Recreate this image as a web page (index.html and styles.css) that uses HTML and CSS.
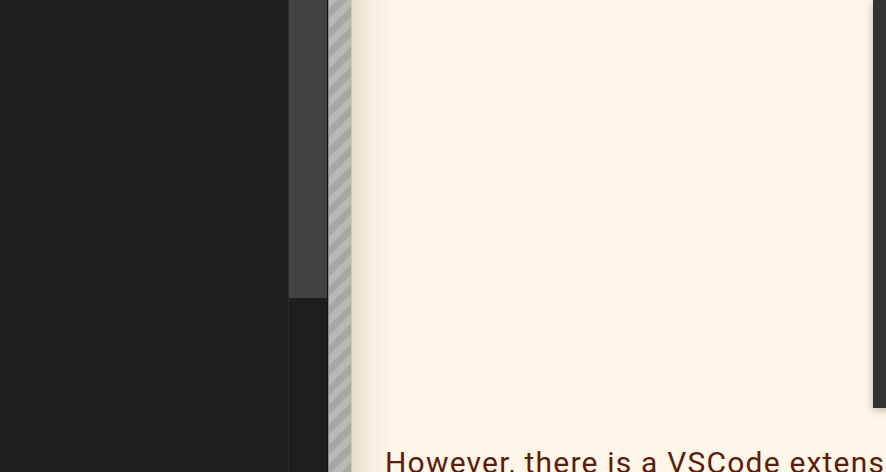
FILE: index.html
```html
<!DOCTYPE html>
<html>
<head>
<meta charset="utf-8">
<link rel="stylesheet" href="styles.css">
</head>
<body>
<div class="app">
  <div class="sidebar"></div>
  <div class="scroll-track"><div class="scroll-thumb"></div></div>
  <div class="divider"></div>
  <div class="gutter"></div>
  <main class="page">
    <div class="code-box"></div>
    <p class="para">However, there is a VSCode extension</p>
  </main>
</div>
</body>
</html>
```
FILE: styles.css
```css
html, body {
  margin: 0;
  padding: 0;
  width: 886px;
  height: 472px;
  overflow: hidden;
  background: #1e1e1e;
}
.app {
  display: flex;
  height: 472px;
}
.sidebar {
  width: 288px;
  flex: none;
  background: #1e1e1e;
  border-right: 1px solid #2b2b2b;
}
.scroll-track {
  width: 38px;
  flex: none;
  background: #1e1e1e;
}
.scroll-thumb {
  height: 298px;
  background: #424242;
}
.divider {
  width: 1px;
  flex: none;
  background: #111;
  border-right: 1px solid #8a8a8a;
}
.gutter {
  width: 22px;
  flex: none;
  background: repeating-linear-gradient(-45deg, #a7a7a7 0 7px, #b8b8b8 7px 14px);
  border-right: 1px solid #d6c9a0;
}
.page {
  flex: 1;
  position: relative;
  background:
    linear-gradient(90deg, rgba(150, 130, 95, 0.22) 0, rgba(150, 130, 95, 0.08) 18px, rgba(150, 130, 95, 0) 40px),
    #fdf6e9;
  overflow: hidden;
}
.code-box {
  position: absolute;
  top: 0;
  left: 521px;
  width: 40px;
  height: 408px;
  background: #333333;
  box-shadow: 0 2px 8px rgba(80, 60, 30, 0.35);
}
.para {
  position: absolute;
  left: 33px;
  top: 443px;
  margin: 0;
  white-space: nowrap;
  font-family: Roboto, "Noto Sans", sans-serif;
  font-size: 30px;
  letter-spacing: 1.2px;
  line-height: 40px;
  color: #5c1d0a;
}
```
